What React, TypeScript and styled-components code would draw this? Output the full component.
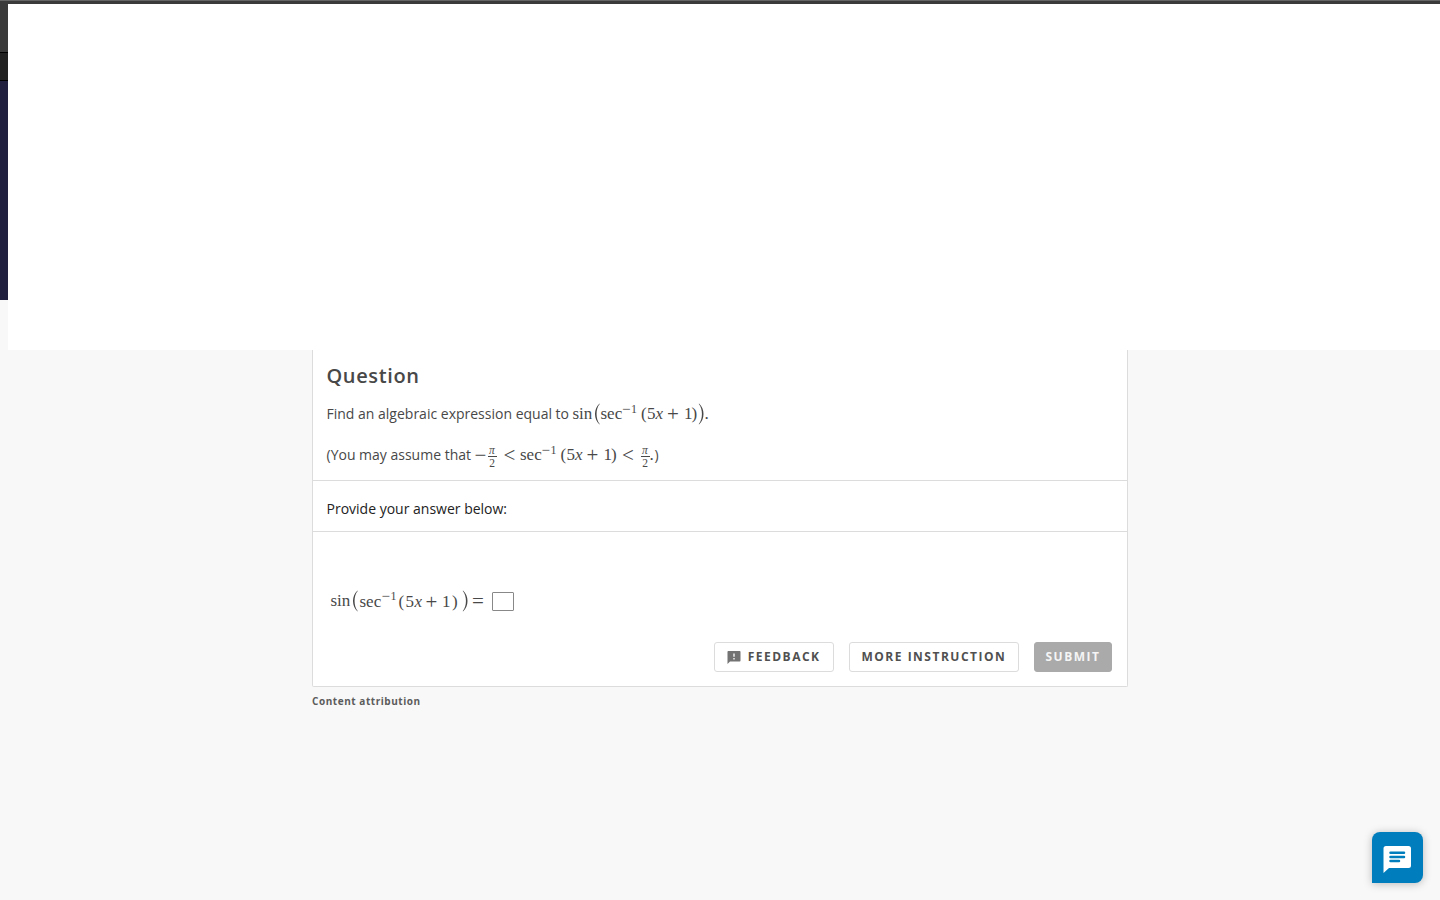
import React from "react";
import styled, { createGlobalStyle } from "styled-components";

const GlobalStyle = createGlobalStyle`
  * {
    box-sizing: border-box;
  }
  body {
    margin: 0;
    height: 900px;
    overflow: hidden;
    background: #f8f8f8;
    color: #484848;
    font-family: "Open Sans", sans-serif;
  }
`;

const TopBar = styled.div`
  height: 4px;
  background: #3a3a3a;
  border-top: 1px solid #656565;
`;

const Cover = styled.div`
  display: flex;
  height: 346px;
`;

const Rail = styled.div`
  width: 8px;
`;

const RailStrip = styled.div<{ height: number; color: string; line?: boolean }>`
  height: ${(props) => props.height}px;
  background: ${(props) => props.color};
  border-bottom: ${(props) => (props.line ? "1px solid #000" : "none")};
`;

const CoverPanel = styled.div`
  flex: 1;
  background: #fff;
`;

const Page = styled.main`
  width: 816px;
  margin: 0 auto;
`;

const Card = styled.div`
  height: 337px;
  background: #fff;
  border: 1px solid #dcdcdc;
  border-top: none;
  border-radius: 0 0 2px 2px;
`;

const Prompt = styled.section`
  height: 131px;
  padding: 11px 13.5px 0;
  border-bottom: 1px solid #dcdcdc;
`;

const Title = styled.h2`
  margin: 0;
  font-size: 20px;
  font-weight: 600;
  line-height: 30px;
  letter-spacing: 0.62px;
`;

const Line = styled.div<{ gap: number }>`
  display: flex;
  align-items: center;
  height: 26px;
  margin-top: ${(props) => props.gap}px;
  font-size: 14px;
  line-height: 26px;
  white-space: pre;
`;

const Words = styled.span<{ width: number }>`
  width: ${(props) => props.width}px;
`;

const AnswerLabel = styled.div`
  height: 51px;
  padding: 18px 13.5px 0;
  border-bottom: 1px solid #dcdcdc;
  color: #222;
  font-size: 14px;
  line-height: 20px;
`;

const Answer = styled.section`
  display: flex;
  height: 110px;
  padding: 56px 0 0 17.5px;
`;

const MathRow = styled.span`
  display: flex;
  align-items: center;
  height: 26px;
  font-family: "Liberation Serif", serif;
  font-size: 17px;
  line-height: 26px;
  white-space: pre;
`;

const Term = styled.span<{ width: number; italic?: boolean; drop?: number }>`
  flex: none;
  width: ${(props) => props.width}px;
  font-style: ${(props) => (props.italic ? "italic" : "normal")};
  padding-top: ${(props) => (props.drop || 0) * 2}px;
`;

const Operator = styled(Term)`
  font-size: 21px;
`;

const Sup = styled(Term)`
  padding-bottom: 9px;
  font-size: 12px;
  line-height: 17px;
`;

const SupMinus = styled(Sup)`
  font-size: 15px;
`;

const Bracket = styled.svg`
  flex: none;
  fill: #484848;
`;

const Fraction = styled.span`
  flex: none;
  width: 9px;
  margin-top: 3px;
  font-size: 11.5px;
  line-height: 11px;
  text-align: center;
`;

const Numerator = styled.span`
  display: block;
  height: 12px;
  border-bottom: 1px solid #484848;
  font-style: italic;
  line-height: 10px;
`;

const Denominator = styled.span`
  display: block;
  height: 11px;
  line-height: 12px;
`;

const Blank = styled.input`
  width: 22px;
  height: 19px;
  margin: 4px 0 0;
  padding: 0;
  border: 1px solid #888;
  border-radius: 1px;
  background: #fff;
`;

const Actions = styled.div`
  display: flex;
  justify-content: flex-end;
  gap: 15px;
  padding-right: 15px;
`;

const Button = styled.button<{ width: number; filled?: boolean }>`
  display: flex;
  align-items: center;
  justify-content: flex-start;
  width: ${(props) => props.width}px;
  height: 30px;
  padding: 0 0 1px ${(props) => (props.filled ? 10.5 : 11.5)}px;
  border: 1px solid ${(props) => (props.filled ? "#aaa" : "#dcdcdc")};
  border-radius: 3px;
  background: ${(props) => (props.filled ? "#aaa" : "#fff")};
  color: ${(props) => (props.filled ? "#f5f5f5" : "#505050")};
  font-family: inherit;
  font-size: 12px;
  font-weight: 700;
  letter-spacing: 1.5px;
  white-space: nowrap;
`;

const FeedbackIcon = styled.svg`
  flex: none;
  margin: 2px 7.2px 0 0;
`;

const Attribution = styled.div`
  margin-top: 7px;
  color: #5c5c5c;
  font-size: 10px;
  font-weight: 700;
  line-height: 14px;
  letter-spacing: 0.55px;
`;

const Chat = styled.button`
  position: fixed;
  right: 17px;
  bottom: 17px;
  width: 51px;
  height: 51px;
  padding: 0;
  border: none;
  border-radius: 8px 8px 8px 0;
  background: #007dbc;
  box-shadow: 0 1px 8px rgba(0, 0, 0, 0.25);
`;

interface ParenProps {
  close?: boolean;
  width: number;
}

const BigParen: React.FC<ParenProps> = ({ close, width }) => (
  <Bracket width={width} height="22" viewBox={`0 0 ${width} 22`}>
    <path
      d={
        close
          ? "M1 .5C7 5.5 7 16.5 1 21.5L.8 21.1C5 16 5 6 .8 .9Z"
          : "M5.5 .5C-.5 5.5 -.5 16.5 5.5 21.5L5.7 21.1C1.5 16 1.5 6 5.7 .9Z"
      }
    />
  </Bracket>
);

const HalfPi = () => (
  <Fraction>
    <Numerator>π</Numerator>
    <Denominator>2</Denominator>
  </Fraction>
);

const Question = () => (
  <Prompt>
    <Title>Question</Title>
    <Line gap={10}>
      <Words width={246}>Find an algebraic expression equal to</Words>
      <MathRow>
        <Term width={21}>sin</Term>
        <BigParen width={7} />
        <Term width={21.5}>sec</Term>
        <SupMinus width={9}>−</SupMinus>
        <Sup width={10}>1</Sup>
        <Term width={6}>(</Term>
        <Term width={8.5}>5</Term>
        <Term width={11.5} italic>x</Term>
        <Operator width={17}>+</Operator>
        <Term width={7.5}>1</Term>
        <Term width={6}>)</Term>
        <BigParen width={7} close />
        <Term width={5}>.</Term>
      </MathRow>
    </Line>
    <Line gap={15}>
      <Words width={148}>(You may assume that</Words>
      <MathRow>
        <Operator width={13}>−</Operator>
        <HalfPi />
        <Term width={7}> </Term>
        <Operator width={16.5}>&lt;</Operator>
        <Term width={21.5}>sec</Term>
        <SupMinus width={9}>−</SupMinus>
        <Sup width={10}>1</Sup>
        <Term width={6}>(</Term>
        <Term width={8.5}>5</Term>
        <Term width={11.5} italic>x</Term>
        <Operator width={17}>+</Operator>
        <Term width={7.5}>1</Term>
        <Term width={11}>)</Term>
        <Operator width={18.5}>&lt;</Operator>
        <HalfPi />
        <Term width={5}>.</Term>
      </MathRow>
      <span>)</span>
    </Line>
  </Prompt>
);

const App: React.FC = () => {
  return (
    <>
      <GlobalStyle />
      <TopBar />
      <Cover>
        <Rail>
          <RailStrip height={49} color="#3a3a3a" line />
          <RailStrip height={28} color="#222" line />
          <RailStrip height={219} color="#21203e" />
        </Rail>
        <CoverPanel />
      </Cover>
      <Page>
        <Card>
          <Question />
          <AnswerLabel>Provide your answer below:</AnswerLabel>
          <Answer>
            <MathRow>
              <Term width={21}>sin</Term>
              <BigParen width={8} />
              <Term width={22} drop={1}>sec</Term>
              <SupMinus width={9}>−</SupMinus>
              <Sup width={8}>1</Sup>
              <Term width={7} drop={1}>(</Term>
              <Term width={9} drop={1}>5</Term>
              <Term width={11} drop={1} italic>x</Term>
              <Operator width={16.5} drop={1}>+</Operator>
              <Term width={10} drop={1}>1</Term>
              <Term width={9.5} drop={1}>)</Term>
              <BigParen width={10.5} close />
              <Operator width={20}>=</Operator>
            </MathRow>
            <Blank />
          </Answer>
          <Actions>
            <Button width={120}>
              <FeedbackIcon width="14" height="13" viewBox="0 0 14 13">
                <path d="M1.3 0H12.7Q13.5 0 13.5.8V9.8Q13.5 10.6 12.7 10.6H3L.5 13V.8Q.5 0 1.3 0Z" fill="#737373" />
                <path d="M7 2.6V5.8M7 7V8.4" stroke="#fff" strokeWidth="1.3" />
              </FeedbackIcon>
              FEEDBACK
            </Button>
            <Button width={170}>MORE INSTRUCTION</Button>
            <Button width={78} filled>SUBMIT</Button>
          </Actions>
        </Card>
        <Attribution>Content attribution</Attribution>
      </Page>
      <Chat aria-label="Open chat">
        <svg width="51" height="51" viewBox="0 0 51 51">
          <path d="M14 14H36.5Q39 14 39 16.5V33.5Q39 36 36.5 36H17L11.5 41V16.5Q11.5 14 14 14Z" fill="#fff" />
          <path d="M18.5 20.8H32M18.5 24.9H32M18.5 29H27" stroke="#007dbc" strokeWidth="2.5" strokeLinecap="round" />
        </svg>
      </Chat>
    </>
  );
};

export default App;
